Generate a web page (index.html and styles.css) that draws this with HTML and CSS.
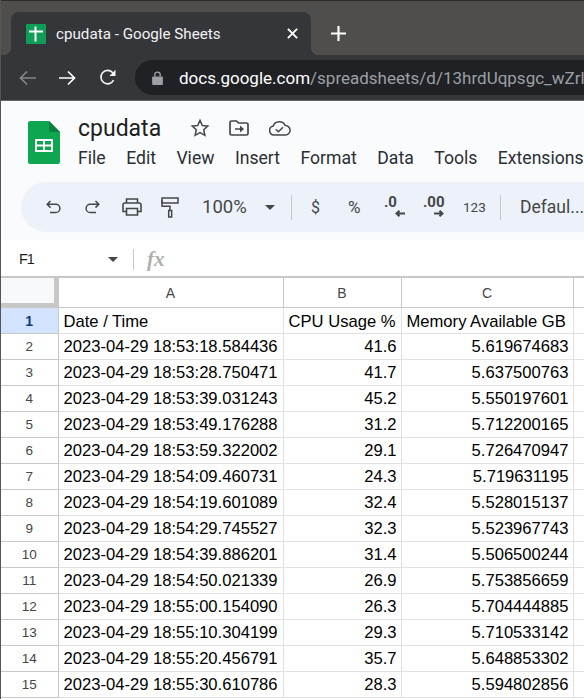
FILE: index.html

```html
<!DOCTYPE html>
<html lang="en">
<head>
  <meta charset="UTF-8">
  <title>cpudata - Google Sheets</title>
  <link rel="stylesheet" href="styles.css">
</head>
<body>
  <div class="tabstrip">
    <div class="tab">
      <svg class="favicon" width="20" height="20" viewBox="0 0 20 20">
        <rect width="20" height="20" rx="1" fill="#0f9d58"/>
        <path d="M3 7.500h14M9.500 2.500v15" stroke="#fff" stroke-width="2" fill="none"/>
      </svg>
      <span class="tab-title">cpudata - Google Sheets</span>
      <svg class="tab-close" width="11" height="11" viewBox="0 0 10 10">
        <path d="M.8.8l8.400 8.400M9.200.8L.8 9.200" stroke="#fff" stroke-width="1.700"/>
      </svg>
    </div>
    <svg class="new-tab" width="15" height="15" viewBox="0 0 14 14">
      <path d="M7 0v14M0 7h14" stroke="#fff" stroke-width="2"/>
    </svg>
  </div>

  <div class="navbar">
    <svg class="nav-icon" width="17" height="16" viewBox="0 0 17 16" fill="none">
      <path d="M17 8H1.500M8 1.500L1.500 8 8 14.500" stroke="#85878a" stroke-width="1.700"/>
    </svg>
    <svg class="nav-icon" width="17" height="16" viewBox="0 0 17 16" fill="none">
      <path d="M0 8h15.500M9 1.500L15.500 8 9 14.500" stroke="#fff" stroke-width="1.700"/>
    </svg>
    <svg class="nav-icon reload" width="17" height="17" viewBox="0 0 16 16" fill="none">
      <path d="M13.700 10.500A6.300 6.300 0 1 1 12.700 3.300L14.500 5" stroke="#f1f3f4" stroke-width="1.600"/>
      <path d="M15.500 .8v5.700H9.800z" fill="#f1f3f4"/>
    </svg>
    <div class="urlbar">
      <svg width="11" height="14" viewBox="0 0 10 13">
        <path d="M2.500 5V3.500a2.500 2.500 0 0 1 5 0V5" stroke="#9aa0a6" stroke-width="1.300" fill="none"/>
        <rect y="5" width="10" height="8" rx="1" fill="#9aa0a6"/>
      </svg>
      <span class="url"><b>docs.google.com</b>/spreadsheets/d/13hrdUqpsgc_wZrlk</span>
    </div>
  </div>

  <div class="docs-header">
    <svg class="sheets-logo" width="32" height="43" viewBox="0 0 32 43">
      <path d="M2 0h19l11 11v30a2 2 0 0 1-2 2H2a2 2 0 0 1-2-2V2a2 2 0 0 1 2-2z" fill="#0ea64f"/>
      <path d="M21 0l11 11H23a2 2 0 0 1-2-2z" fill="#0b7f3c"/>
      <path d="M7 18h18v13H7z M9 20v3.500h6V20z M17 20v3.500h6V20z M9 25.500V29h6v-3.500z M17 25.500V29h6v-3.500z" fill="#fff" fill-rule="evenodd"/>
    </svg>
    <div class="docs-title">
      <div class="title-row">
        <span class="doc-name">cpudata</span>
        <svg class="title-icon" width="20" height="20" viewBox="0 0 20 20" fill="none">
          <path d="M10 2.400l2.300 5.100 5.500.6-4.100 3.700 1.200 5.500L10 14.500l-4.900 2.800 1.200-5.500-4.100-3.700 5.500-.6z" stroke="#444746" stroke-width="1.500"/>
        </svg>
        <svg class="title-icon" width="20" height="16" viewBox="0 0 20 16" fill="none">
          <path d="M1 2.500A1.500 1.500 0 0 1 2.500 1h5l2 2h8A1.500 1.500 0 0 1 19 4.500v9a1.500 1.500 0 0 1-1.500 1.500h-15A1.500 1.500 0 0 1 1 13.500z" stroke="#444746" stroke-width="1.700"/>
          <path d="M6 9h6" stroke="#444746" stroke-width="1.500"/>
          <path d="M11 5.500L15 9l-4 3.500z" fill="#444746"/>
        </svg>
        <svg class="title-icon" width="23" height="16" viewBox="0 0 23 16" fill="none">
          <path d="M6 15a4.500 4.500 0 0 1-.8-8.900A6.500 6.500 0 0 1 17.300 5.600 4.700 4.700 0 0 1 17.500 15z" stroke="#444746" stroke-width="1.500"/>
          <path d="M7.800 9.300l2.600 2.500 4.600-4.600" stroke="#444746" stroke-width="1.500"/>
        </svg>
      </div>
      <div class="menu-row">
        <span>File</span>
        <span>Edit</span>
        <span>View</span>
        <span>Insert</span>
        <span>Format</span>
        <span>Data</span>
        <span>Tools</span>
        <span>Extensions</span>
      </div>
    </div>
  </div>

  <div class="toolbar-wrap">
    <div class="toolbar">
      <svg class="tool undo" width="15" height="14" viewBox="0 0 15 14" fill="none">
        <path d="M4.500 1L1.200 4.300l3.300 3.300M1.500 4.300h8.300a4.100 4.100 0 0 1 0 8.200H4" stroke="#444746" stroke-width="1.500"/>
      </svg>
      <svg class="tool redo" width="15" height="14" viewBox="0 0 15 14" fill="none">
        <path d="M10.500 1l3.300 3.300-3.300 3.300M13.500 4.300H5.200a4.100 4.100 0 0 0 0 8.200H11" stroke="#444746" stroke-width="1.500"/>
      </svg>
      <svg class="tool print" width="20" height="18" viewBox="0 0 20 18" fill="none">
        <path d="M4.500 5V1h11v4M4.500 13.500H1V7a2 2 0 0 1 2-2h14a2 2 0 0 1 2 2v6.500h-3.500" stroke="#444746" stroke-width="1.600"/>
        <path d="M4.500 10.500h11V17h-11z" stroke="#444746" stroke-width="1.600"/>
      </svg>
      <svg class="tool paint" width="18" height="21" viewBox="0 0 18 21" fill="none">
        <path d="M1 1h16v5H1z" stroke="#444746" stroke-width="1.500"/>
        <path d="M1 3.300v6h8v4" stroke="#444746" stroke-width="1.500"/>
        <path d="M7.700 13.500h3V20h-3z" stroke="#444746" stroke-width="1.500"/>
      </svg>
      <span class="zoom-value">100%</span>
      <span class="caret"></span>
      <span class="sep sep-one"></span>
      <span class="tool-text dollar">$</span>
      <span class="tool-text percent">%</span>
      <span class="decimal dec-less">.0
        <svg width="10" height="7" viewBox="0 0 10 7"><path d="M10 3.500H2M4.500.7L1.500 3.500l3 2.800" stroke="#444746" stroke-width="2" fill="none"/></svg>
      </span>
      <span class="decimal dec-more">.00
        <svg width="10" height="7" viewBox="0 0 10 7"><path d="M0 3.500h8M5.500.7l3 2.800-3 2.800" stroke="#444746" stroke-width="2" fill="none"/></svg>
      </span>
      <span class="tool-text num-format">123</span>
      <span class="sep sep-two"></span>
      <span class="font-name">Defaul...</span>
    </div>
  </div>

  <div class="formula-bar">
    <span class="cell-ref">F1</span>
    <span class="caret ref-caret"></span>
    <span class="sep fx-sep"></span>
    <span class="fx">fx</span>
  </div>

  <table class="grid">
    <colgroup>
      <col class="col-row">
      <col class="col-a">
      <col class="col-b">
      <col class="col-c">
      <col>
    </colgroup>
    <tr class="col-heads">
      <th class="corner"></th>
      <th>A</th>
      <th>B</th>
      <th>C</th>
      <th></th>
    </tr>
    <tr class="first-row">
      <th class="row-head active">1</th>
      <td>Date / Time</td>
      <td>CPU Usage %</td>
      <td>Memory Available GB</td>
      <td></td>
    </tr>
    <tr><th class="row-head">2</th><td>2023-04-29 18:53:18.584436</td><td class="num">41.6</td><td class="num">5.619674683</td><td></td></tr>
    <tr><th class="row-head">3</th><td>2023-04-29 18:53:28.750471</td><td class="num">41.7</td><td class="num">5.637500763</td><td></td></tr>
    <tr><th class="row-head">4</th><td>2023-04-29 18:53:39.031243</td><td class="num">45.2</td><td class="num">5.550197601</td><td></td></tr>
    <tr><th class="row-head">5</th><td>2023-04-29 18:53:49.176288</td><td class="num">31.2</td><td class="num">5.712200165</td><td></td></tr>
    <tr><th class="row-head">6</th><td>2023-04-29 18:53:59.322002</td><td class="num">29.1</td><td class="num">5.726470947</td><td></td></tr>
    <tr><th class="row-head">7</th><td>2023-04-29 18:54:09.460731</td><td class="num">24.3</td><td class="num">5.719631195</td><td></td></tr>
    <tr><th class="row-head">8</th><td>2023-04-29 18:54:19.601089</td><td class="num">32.4</td><td class="num">5.528015137</td><td></td></tr>
    <tr><th class="row-head">9</th><td>2023-04-29 18:54:29.745527</td><td class="num">32.3</td><td class="num">5.523967743</td><td></td></tr>
    <tr><th class="row-head">10</th><td>2023-04-29 18:54:39.886201</td><td class="num">31.4</td><td class="num">5.506500244</td><td></td></tr>
    <tr><th class="row-head">11</th><td>2023-04-29 18:54:50.021339</td><td class="num">26.9</td><td class="num">5.753856659</td><td></td></tr>
    <tr><th class="row-head">12</th><td>2023-04-29 18:55:00.154090</td><td class="num">26.3</td><td class="num">5.704444885</td><td></td></tr>
    <tr><th class="row-head">13</th><td>2023-04-29 18:55:10.304199</td><td class="num">29.3</td><td class="num">5.710533142</td><td></td></tr>
    <tr><th class="row-head">14</th><td>2023-04-29 18:55:20.456791</td><td class="num">35.7</td><td class="num">5.648853302</td><td></td></tr>
    <tr><th class="row-head">15</th><td>2023-04-29 18:55:30.610786</td><td class="num">28.3</td><td class="num">5.594802856</td><td></td></tr>
  </table>
</body>
</html>
```

FILE: styles.css

```css
* {
  box-sizing: border-box;
}

html, body {
  height: 699px;
  overflow: hidden;
}

body {
  margin: 0;
  background: #fff;
  font-family: Roboto, "Liberation Sans", sans-serif;
  border-left: 1px solid #555;
}

svg {
  display: block;
  flex: none;
}

/* browser chrome */
.tabstrip {
  height: 55px;
  background: #4f4e4c;
  border-top: 1px solid #2b2c2e;
  padding: 11px 0 0 10px;
  display: flex;
  align-items: flex-start;
}

.tab {
  position: relative;
  width: 300px;
  height: 43px;
  background: #35363a;
  border-radius: 8px 8px 0 0;
  display: flex;
  align-items: center;
  padding: 0 13px 0 15px;
}

/* the little flares at the bottom corners of the tab */
.tab::before,
.tab::after {
  content: "";
  position: absolute;
  bottom: 0;
  width: 8px;
  height: 8px;
}

.tab::before {
  left: -8px;
  background: radial-gradient(circle at 0 0, transparent 8px, #35363a 8.500px);
}

.tab::after {
  right: -8px;
  background: radial-gradient(circle at 100% 0, transparent 8px, #35363a 8.500px);
}

.tab-title {
  margin-left: 10px;
  flex: 1;
  color: #f1f3f4;
  font-size: 15.200px;
  white-space: nowrap;
}

.new-tab {
  margin: 14px 0 0 20px;
}

.navbar {
  height: 45px;
  background: #35363a;
  display: flex;
  align-items: center;
  padding: 0 0 0 18px;
}

.nav-icon {
  margin-right: 23px;
}

.nav-icon.reload {
  margin-right: 19px;
}

.urlbar {
  flex: 1;
  height: 35px;
  background: #202124;
  border-radius: 18px 0 0 18px;
  display: flex;
  align-items: center;
  padding-left: 17px;
  overflow: hidden;
}

.url {
  margin-left: 16px;
  font-size: 17px;
  color: #9aa0a6;
  white-space: nowrap;
}

.url b {
  font-weight: 400;
  color: #fff;
}

/* docs header */
.docs-header {
  height: 82px;
  background: #f9fbfd;
  border-top: 1px solid #666;
  display: flex;
  padding: 20px 0 0 27px;
}

.docs-title {
  margin: -8px 0 0 18px;
}

.title-row {
  display: flex;
  align-items: center;
  height: 30px;
}

.doc-name {
  font-size: 23px;
  color: #1f1f1f;
  width: 112px;
}

.title-icon {
  margin-right: 19px;
}

.menu-row {
  display: flex;
  gap: 20.500px;
  margin-top: 5px;
  font-size: 17.600px;
  line-height: 20px;
  color: #2b2e33;
  white-space: nowrap;
}

.toolbar-wrap {
  height: 58px;
  background: #f9fbfd;
  padding: 0 0 0 20px;
  overflow: hidden;
}

.toolbar {
  width: 600px;
  height: 50px;
  background: #edf2fa;
  border-radius: 25px;
  display: flex;
  align-items: center;
  color: #444746;
  padding-left: 25px;
}

.redo { margin-left: 24px; }
.print { margin-left: 22px; }
.paint { margin-left: 19px; }

.zoom-value {
  margin-left: 23px;
  width: 46px;
  font-size: 18.500px;
  white-space: nowrap;
}

.caret {
  width: 0;
  height: 0;
  margin-left: 17px;
  border-left: 5px solid transparent;
  border-right: 5px solid transparent;
  border-top: 5px solid #444746;
}

.sep {
  width: 1px;
  height: 25px;
  background: #c7c7c7;
}

.sep-one { margin-left: 16px; }

.tool-text {
  font-size: 16px;
}

.dollar { margin-left: 19px; width: 9px; }
.percent { margin-left: 28px; width: 14px; font-size: 17px; }

.decimal {
  display: flex;
  flex-direction: column;
  align-items: flex-start;
  font-size: 15px;
  font-weight: 700;
  line-height: 13px;
  height: 22px;
  color: #444746;
}

.decimal svg {
  align-self: flex-end;
  margin-top: 1px;
}

.dec-less { margin-left: 22px; width: 21px; }
.dec-more { margin-left: 18px; width: 21px; }

.num-format {
  margin-left: 19px;
  width: 23px;
  font-size: 13.500px;
}

.sep-two { margin-left: 14px; }

.font-name {
  margin-left: 19px;
  font-size: 17.500px;
}

.formula-bar {
  height: 37px;
  background: #fff;
  border-bottom: 1px solid #c7c7c7;
  display: flex;
  align-items: center;
  padding: 2px 0 0 18px;
}

.cell-ref {
  width: 89px;
  font-family: "Liberation Sans", sans-serif;
  font-size: 14.500px;
  letter-spacing: -1px;
  color: #1f1f1f;
}

.ref-caret {
  margin-left: 0;
}

.fx-sep {
  height: 21px;
  margin-left: 15px;
}

.fx {
  margin-left: 13px;
  font-family: "Liberation Serif", serif;
  font-style: italic;
  font-weight: 700;
  font-size: 21px;
  color: #b0b0b0;
}

/* grid */
.grid {
  table-layout: fixed;
  border-collapse: collapse;
  width: 600px;
  font-family: "Liberation Sans", sans-serif;
}

.col-row { width: 57px; }
.col-a { width: 225px; }
.col-b { width: 118px; }
.col-c { width: 172px; }

.grid tr {
  height: 26px;
}

.grid .col-heads {
  height: 30px;
}

.grid th {
  font-weight: 400;
  font-size: 14px;
  color: #444746;
  background: #fff;
  border: 1px solid #c7c7c7;
  padding: 0;
}

.grid td {
  font-size: 16.600px;
  color: #000;
  border: 1px solid #e1e1e1;
  padding: 0 4px 0 5px;
  white-space: nowrap;
  overflow: hidden;
}

.grid .first-row td {
  padding-top: 2px;
}

.grid .num {
  text-align: right;
}

.grid .corner {
  background: #f8f9fa;
  border-left: none;
  box-shadow: inset -4px -4px 0 #c7c7c7;
}

.grid .row-head {
  border-left: none;
  font-size: 13.500px;
  border-color: #c7c7c7;
}

.grid .row-head.active {
  background: #d3e3fd;
  font-size: 14px;
  font-weight: 700;
  color: #0b3d80;
}
```
